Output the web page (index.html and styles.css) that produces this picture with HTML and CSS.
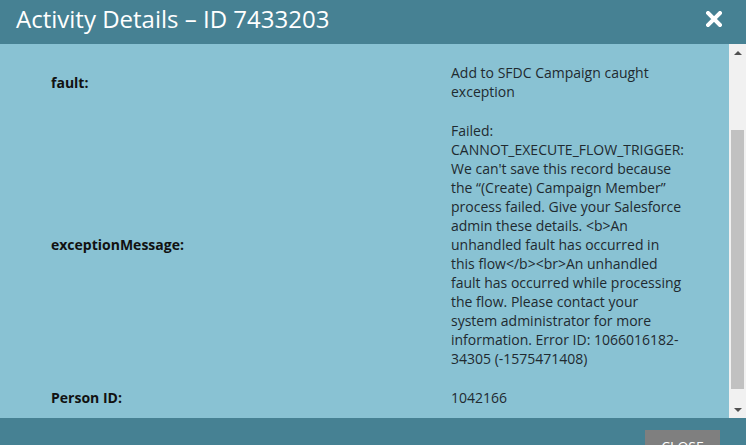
FILE: index.html
```html
<!DOCTYPE html>
<html>
<head>
<meta charset="utf-8">
<link rel="stylesheet" href="styles.css">
</head>
<body>
<div class="dialog">
  <div class="header">
    <div class="title">Activity Details – ID 7433203</div>
    <svg class="close-x" width="16" height="16" viewBox="0 0 16 16"><path d="M2 2 L14 14 M14 2 L2 14" stroke="#fff" stroke-width="4" stroke-linecap="square"/></svg>
  </div>
  <div class="body">
    <div class="content">
      <div class="row">
        <div class="label">fault:</div>
        <div class="value">Add to SFDC Campaign caught exception</div>
      </div>
      <div class="row">
        <div class="label">exceptionMessage:</div>
        <div class="value">Failed: CANNOT_EXECUTE_FLOW_TRIGGER: We can't save this record because the “(Create) Campaign Member” process failed. Give your Salesforce admin these details. &lt;b&gt;An unhandled fault has occurred in this flow&lt;/b&gt;&lt;br&gt;An unhandled fault has occurred while processing the flow. Please contact your system administrator for more information. Error ID: 1066016182-34305 (-1575471408)</div>
      </div>
      <div class="row">
        <div class="label">Person ID:</div>
        <div class="value">1042166</div>
      </div>
    </div>
    <div class="scrollbar">
      <div class="sb-btn"><div class="arrow-up"></div></div>
      <div class="sb-track">
        <div class="sb-thumb"></div>
      </div>
      <div class="sb-btn"><div class="arrow-down"></div></div>
    </div>
  </div>
  <div class="footer">
    <div class="close-btn">CLOSE</div>
  </div>
</div>
</body>
</html>
```
FILE: styles.css
```css
html, body {
  margin: 0;
  padding: 0;
  width: 746px;
  height: 445px;
  overflow: hidden;
  font-family: "Open Sans", "DejaVu Sans", sans-serif;
}
.dialog {
  display: flex;
  flex-direction: column;
  width: 746px;
  height: 445px;
}
.header {
  height: 44px;
  flex: none;
  background: #468193;
  display: flex;
  align-items: center;
  justify-content: space-between;
  padding: 0 24px 0 16px;
  box-sizing: border-box;
}
.title {
  color: #fff;
  font-size: 24px;
  line-height: 30px;
  margin-top: -6px;
}
.close-x {
  display: block;
  margin-top: -6px;
}
.body {
  height: 374px;
  flex: none;
  display: flex;
  background: #89c2d3;
}
.content {
  flex: 1;
  padding: 9px 0 0 51px;
  box-sizing: border-box;
  overflow: hidden;
}
.row {
  display: flex;
  align-items: center;
  padding: 10px 0;
}
.label {
  width: 400px;
  flex: none;
  font-weight: bold;
  font-size: 14px;
  line-height: 19px;
  color: #111;
}
.value {
  width: 231px;
  font-size: 14px;
  line-height: 19px;
  color: #1f2a30;
}
.scrollbar {
  width: 17px;
  flex: none;
  display: flex;
  flex-direction: column;
  background: #f1f1f1;
}
.sb-btn {
  height: 17px;
  flex: none;
  display: flex;
  align-items: center;
  justify-content: center;
}
.arrow-up {
  width: 0;
  height: 0;
  border-left: 4px solid transparent;
  border-right: 4px solid transparent;
  border-bottom: 4px solid #505050;
}
.arrow-down {
  width: 0;
  height: 0;
  border-left: 4px solid transparent;
  border-right: 4px solid transparent;
  border-top: 4px solid #505050;
}
.sb-track {
  flex: 1;
  padding: 69px 2px 12px 2px;
  display: flex;
}
.sb-thumb {
  flex: 1;
  background: #c1c1c1;
}
.footer {
  flex: 1;
  background: #468193;
  display: flex;
  justify-content: flex-end;
  padding: 12px 26px 0 0;
}
.close-btn {
  width: 75px;
  height: 30px;
  background: #7f7f7f;
  color: #fff;
  font-size: 14px;
  text-align: center;
  line-height: 30px;
  padding-top: 2px;
  box-sizing: border-box;
}
```
